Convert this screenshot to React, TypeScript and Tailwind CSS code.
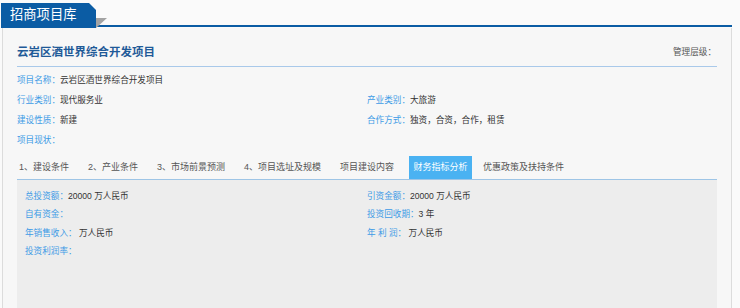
import React from 'react'

const font = { fontFamily: '"Liberation Sans", "Noto Sans CJK SC", sans-serif' }

const tabs = [
  '1、建设条件',
  '2、产业条件',
  '3、市场前景预测',
  '4、项目选址及规模',
  '项目建设内容',
  '财务指标分析',
  '优惠政策及扶持条件',
]

function Field({ label, value }: { label: string; value?: string }) {
  return (
    <div className="whitespace-nowrap">
      <span className="text-[#3d9be6]">{label}</span>
      <span className="text-[#333]">{value}</span>
    </div>
  )
}

export default function App() {
  return (
    <div className="w-[740px] h-[308px] overflow-hidden bg-[#fafafa]" style={font}>
      {/* Header */}
      <div className="relative flex items-end h-[28px] pl-[1px]">
        <div
          className="w-[95px] h-[25px] bg-[#0b5ca4] text-white text-[13.3px] leading-[24px] pl-[9px]"
          style={{ clipPath: 'polygon(0 0, 88px 0, 95px 7px, 95px 100%, 0 100%)' }}
        >
          招商项目库
        </div>
        <div className="w-[636px] h-[2px] bg-[#0b5ca4] mb-[1px]" />
        <svg className="absolute left-[96px] top-[18px]" width="11" height="10" viewBox="0 0 11 10">
          <polygon points="0,0 11,0 0,10" fill="#a3a3a3" />
        </svg>
      </div>

      {/* Panel */}
      <div className="ml-[2px] w-[730px] h-[300px] border border-t-0 border-[#dcdcdc] bg-[#f7f7f7] px-[14px]">
        <div className="flex items-end justify-between pt-[16px] pb-[6px] border-b border-[#a9c9ea]">
          <div className="text-[11.5px] leading-[16px] font-bold text-[#1f5a98]">云岩区酒世界综合开发项目</div>
          <div className="text-[8.6px] leading-[16px] text-[#555] pr-[1px]">管理层级：</div>
        </div>

        <div className="mt-[3px] grid grid-cols-2 text-[8.6px] leading-[20px]">
          <Field label="项目名称：" value="云岩区酒世界综合开发项目" />
          <div />
          <Field label="行业类别：" value="现代服务业" />
          <Field label="产业类别：" value="大旅游" />
          <Field label="建设性质：" value="新建" />
          <Field label="合作方式：" value="独资，合资，合作，租赁" />
          <Field label="项目现状：" />
        </div>

        {/* Tabs */}
        <div className="mt-[6px] flex items-end gap-[15px] border-b border-[#9ec5e6] text-[9px] leading-[23px]">
          {tabs.map((t, i) => (
            <div
              key={t}
              className={
                t === '财务指标分析'
                  ? 'px-[4.5px] bg-[#4ab2f2] text-white -ml-[2px]'
                  : i === tabs.length - 1
                    ? 'px-[2px] text-[#555] -ml-[6px]'
                    : 'px-[2px] text-[#555]'
              }
            >
              {t}
            </div>
          ))}
        </div>

        <div className="h-[200px] bg-[#ededed] px-[8px] pt-[7px]">
          <div className="grid grid-cols-2 text-[8.6px] leading-[18.4px]">
            <Field label="总投资额：" value="20000 万人民币" />
            <Field label="引资金额：" value="20000 万人民币" />
            <Field label="自有资金：" />
            <Field label="投资回收期：" value="3 年" />
            <Field label="年销售收入：" value=" 万人民币" />
            <Field label="年 利 润：" value=" 万人民币" />
            <Field label="投资利润率：" />
          </div>
        </div>
      </div>
    </div>
  )
}
